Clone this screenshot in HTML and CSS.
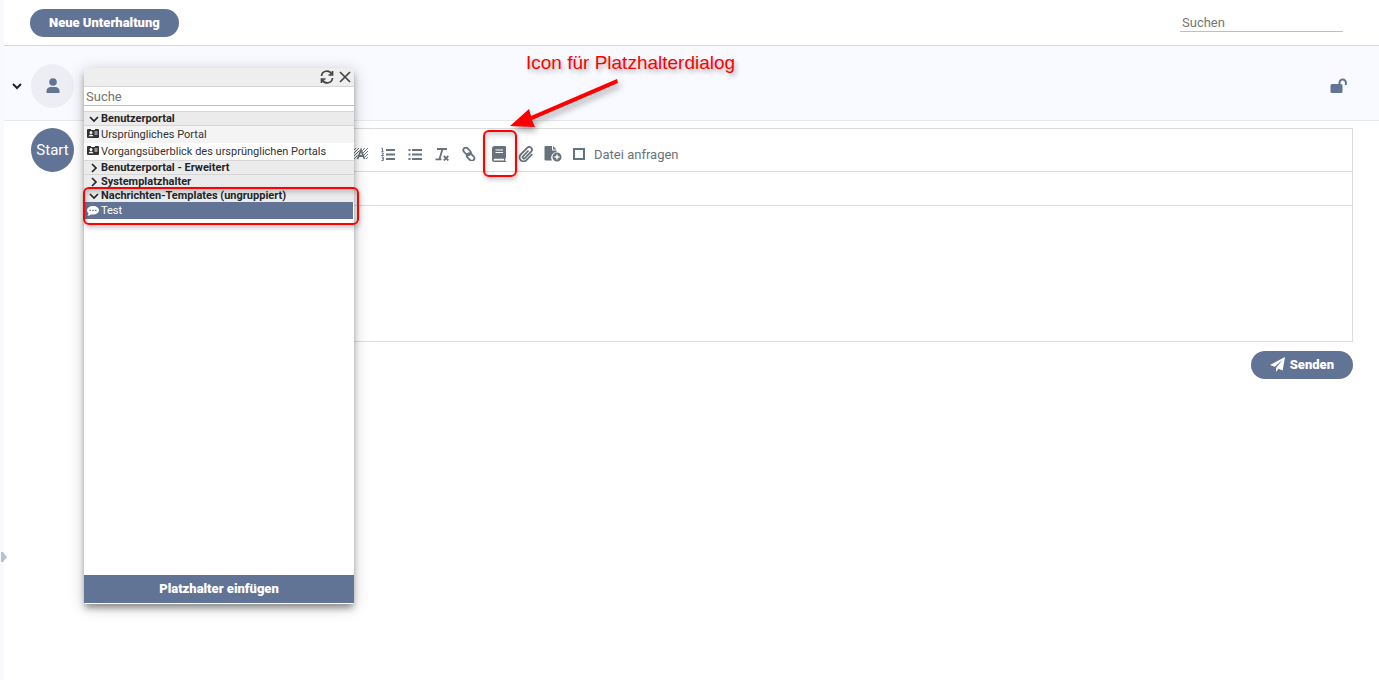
FILE: index.html
```html
<!DOCTYPE html>
<html lang="de">
<head>
    <meta charset="UTF-8">
    <meta name="viewport" content="width=device-width, initial-scale=1.0">
    <title>Unterhaltungen</title>
    <link rel="stylesheet" href="styles.css">
</head>
<body>
    <aside class="rail">
        <svg class="rail-arrow" viewBox="0 0 7 10"><path d="M1 0h2l4 5-4 5H1z"/></svg>
    </aside>
    <main class="content">
        <header class="topbar">
            <button class="pill" type="button">Neue Unterhaltung</button>
            <input class="search" type="text" placeholder="Suchen" aria-label="Suchen">
        </header>

        <section class="thread">
            <svg class="chevron" viewBox="0 0 10 10"><path d="M1 3l4 4 4-4"/></svg>
            <div class="avatar">
                <svg width="14" height="16" viewBox="0 0 14 16"><circle cx="7" cy="4" r="3.8"/><path d="M.5 15v-2C.5 10.500 2.500 9 5 9h4c2.500 0 4.500 1.500 4.500 4v2z"/></svg>
            </div>
            <svg class="lock" width="18" height="16" viewBox="0 0 18 16"><path d="M3 6h9a1.500 1.500 0 0 1 1.500 1.500v6A1.500 1.500 0 0 1 12 15H3A1.500 1.500 0 0 1 1.500 13.500v-6A1.500 1.500 0 0 1 3 6z"/><path class="shackle" d="M10.500 7V4.800a3.200 3.200 0 0 1 6.400 0V7"/></svg>
        </section>

        <section class="compose">
            <div class="avatar start">Start</div>
            <form class="compose-form">
                <div class="editor">
                    <div class="toolbar">
                        <button class="tool" type="button" aria-label="Hintergrundfarbe">
                            <svg viewBox="0 0 14 14">
                                <defs><pattern id="hatch" width="3" height="3" patternUnits="userSpaceOnUse"><path d="M2 0h1v1H2zM1 1h1v1H1zM0 2h1v1H0z"/></pattern></defs>
                                <path fill="url(#hatch)" d="M0 1h14v12H0z"/>
                                <path class="halo" d="M4 11.500L7 4l3 7.500z"/>
                                <path class="line" d="M3.500 12L7 3l3.500 9M5 9h4"/>
                            </svg>
                        </button>
                        <button class="tool" type="button" aria-label="Nummerierte Liste">
                            <svg viewBox="0 0 14 14"><path class="line" d="M5 3h9M5 7.500h9M5 12h9"/><path class="thin" d="M.5 1.500l1-.5v3.500M.5 4.500h2M.5 6h1.800v1L.5 8.500h2.300M.5 10h1.800v3.500H.5M1 11.800h1.300"/></svg>
                        </button>
                        <button class="tool" type="button" aria-label="Liste">
                            <svg viewBox="0 0 14 14"><path class="line" d="M4 3h10M4 7.500h10M4 12h10"/><path d="M.5 2h2v2h-2zM.5 6.500h2v2h-2zM.5 11h2v2h-2z"/></svg>
                        </button>
                        <button class="tool" type="button" aria-label="Formatierung entfernen">
                            <svg viewBox="0 0 14 14"><path class="line" d="M2 2h10M7.500 2L4.500 12M.5 12.300h6M8.800 9l4.500 4.500M13.300 9l-4.500 4.500"/></svg>
                        </button>
                        <button class="tool" type="button" aria-label="Link">
                            <svg viewBox="0 0 14 14"><g class="line" transform="rotate(45 7 7)"><rect x="-.5" y="4" width="8.500" height="5" rx="2.500"/><rect x="6" y="5.500" width="8.500" height="5" rx="2.500"/></g></svg>
                        </button>
                        <button class="tool gap" type="button" aria-label="Platzhalter">
                            <svg class="book" viewBox="0 0 16 16"><path fill-rule="evenodd" d="M3.500 0H14q1 0 1 1v10.500q0 .8-.7 1V15h.7v1H3.500Q1 16 1 13.500v-11Q1 0 3.500 0zM4.500 3.500v1H12v-1zM4.500 6v1H12V6zM3.700 12.800q-1 0-1 .9t1 .9H13v-1.800z"/></svg>
                        </button>
                        <button class="tool" type="button" aria-label="Datei anhängen">
                            <svg class="clip" viewBox="0 0 16 16"><path class="line" d="M10.500 4.500L5 10.300a1.300 1.300 0 0 0 1.900 1.900l6.200-6.500a2.700 2.700 0 0 0-3.900-3.900L2.700 8.500a4 4 0 0 0 5.700 5.700l5.800-6"/></svg>
                        </button>
                        <button class="tool" type="button" aria-label="Datei hinzufügen">
                            <svg class="wide" viewBox="0 0 18 16"><path d="M1.500 0H8v4.500h4.500V6A5.500 5.500 0 0 0 8 14.500H1.500Q.5 14.500.5 13.500V1q0-1 1-1zM9 0l3.500 3.500H9z"/><path fill-rule="evenodd" d="M13 6.500a4.500 4.500 0 1 1 0 9 4.500 4.500 0 0 1 0-9zM12.300 8.500v1.800h-1.800v1.400h1.800v1.800h1.400v-1.800h1.800v-1.400h-1.800V8.500z"/></svg>
                        </button>
                        <label class="request"><input type="checkbox">Datei anfragen</label>
                    </div>
                    <input class="subject" type="text" aria-label="Betreff">
                    <textarea class="message" aria-label="Nachricht"></textarea>
                </div>
                <button class="pill send" type="button">
                    <svg width="15" height="15" viewBox="0 0 16 16"><path d="M16 0L13.500 14.500 9 12.500 6.500 16V11.500L13.500 3 5 10.500 0 8.500z"/></svg>
                    Senden
                </button>
            </form>
        </section>
    </main>

    <div class="dialog" role="dialog" aria-label="Platzhalter">
        <div class="dialog-head">
            <button type="button" aria-label="Aktualisieren"><svg width="14" height="14" viewBox="0 0 14 14"><path d="M1.500 6A5.300 5.300 0 0 1 11.500 4M12.500 1v4h-4M12.500 8A5.300 5.300 0 0 1 2.500 10M1.500 13V9h4"/></svg></button>
            <button type="button" aria-label="Schließen"><svg width="14" height="14" viewBox="0 0 14 14"><path d="M2 2l10 10M12 2L2 12"/></svg></button>
        </div>
        <input class="dialog-search" type="text" placeholder="Suche" aria-label="Suche">
        <ul class="tree">
            <li class="group"><svg class="chevron" viewBox="0 0 10 10"><path d="M1 3l4 4 4-4"/></svg>Benutzerportal</li>
            <li class="item odd"><svg viewBox="0 0 12 12"><path fill-rule="evenodd" d="M1 0h3v1h4V0h3q1 0 1 1v7q0 1-1 1H1Q0 9 0 8V1q0-1 1-1zM4 2a1.500 1.500 0 1 0 0 3 1.500 1.500 0 0 0 0-3zM1.500 7.300h5Q6 5.500 4 5.500T1.500 7.300zM7.500 2.500v1h3v-1zM7.500 4.500v1h3v-1z"/></svg>Ursprüngliches Portal</li>
            <li class="item"><svg viewBox="0 0 12 12"><path fill-rule="evenodd" d="M1 0h3v1h4V0h3q1 0 1 1v7q0 1-1 1H1Q0 9 0 8V1q0-1 1-1zM4 2a1.500 1.500 0 1 0 0 3 1.500 1.500 0 0 0 0-3zM1.500 7.300h5Q6 5.500 4 5.500T1.500 7.300zM7.500 2.500v1h3v-1zM7.500 4.500v1h3v-1z"/></svg>Vorgangsüberblick des ursprünglichen Portals</li>
            <li class="group"><svg class="chevron" viewBox="0 0 10 10"><path d="M3 1l4 4-4 4"/></svg>Benutzerportal - Erweitert</li>
            <li class="group"><svg class="chevron" viewBox="0 0 10 10"><path d="M3 1l4 4-4 4"/></svg>Systemplatzhalter</li>
            <li class="group"><svg class="chevron" viewBox="0 0 10 10"><path d="M1 3l4 4 4-4"/></svg>Nachrichten-Templates (ungruppiert)</li>
            <li class="item selected"><svg viewBox="0 0 12 12"><path fill-rule="evenodd" d="M6 1c3.300 0 6 1.900 6 4.300S9.300 9.600 6 9.600q-1 0-1.900-.2Q2.500 10.700.3 10.800q.9-1 1.100-2.200Q0 7.200 0 5.300C0 2.900 2.700 1 6 1zM2.500 4.700v1.400h1.400V4.700zM5.300 4.700v1.400h1.400V4.700zM8.100 4.700v1.400h1.400V4.700z"/></svg>Test</li>
        </ul>
        <button class="insert" type="button">Platzhalter einfügen</button>
    </div>

    <!-- Hinweise -->
    <div class="mark mark-template"></div>
    <div class="mark mark-icon"></div>
    <p class="note">Icon für Platzhalterdialog</p>
    <svg class="arrow" width="112" height="52" viewBox="0 0 112 52"><path d="M109 0l1 4-86 37 3 7-25-1 19-17 2 7z"/></svg>
</body>
</html>
```
FILE: styles.css
```css
* {
    box-sizing: border-box;
}
body {
    margin: 0;
    min-height: 100vh;
    display: flex;
    position: relative;
    font-family: Roboto, "Liberation Sans", sans-serif;
    font-size: 13px;
    color: #212529;
    background: #fff;
}
button, input, textarea {
    font-family: inherit;
    font-size: inherit;
    border: 0;
    padding: 0;
    margin: 0;
    outline: 0;
    background: none;
}
svg {
    display: block;
    flex: none;
}
.rail {
    width: 4px;
    background: #f8f9fc;
}
.rail-arrow {
    position: absolute;
    left: 0;
    top: 552px;
    width: 7px;
    height: 10px;
    fill: #b4c3d2;
}
.content {
    flex: 1;
    min-width: 0;
}

/* Kopfzeile */
.topbar {
    display: flex;
    justify-content: space-between;
    align-items: center;
    height: 46px;
    padding: 0 36px 0 26px;
    border-bottom: 1px solid #d6d7da;
}
.pill {
    height: 28px;
    padding: 0 19px 1px;
    border-radius: 14px;
    background: #627496;
    color: #fff;
    font-weight: 900;
}
.search {
    width: 163px;
    height: 19px;
    padding: 0 2px;
    border-bottom: 1px solid #bfbfbf;
}
.search::placeholder, .dialog-search::placeholder {
    color: #757575;
    opacity: 1;
}

/* Unterhaltung */
.thread {
    display: flex;
    align-items: center;
    height: 75px;
    padding: 8px 32px 3px 8px;
    background: #f9faff;
    border-bottom: 1px solid #e9eaee;
}
.chevron {
    width: 10px;
    height: 10px;
    fill: none;
    stroke: #212529;
    stroke-width: 2;
}
.avatar {
    display: flex;
    justify-content: center;
    align-items: center;
    flex: none;
    width: 43px;
    height: 44px;
    border-radius: 50%;
    background: #edeef3;
    fill: #627496;
}
.thread .avatar {
    margin-left: 9px;
}
.lock {
    margin-left: auto;
    fill: #627496;
}
.shackle {
    fill: none;
    stroke: #627496;
    stroke-width: 2;
}

/* Editor */
.compose {
    display: flex;
    gap: 10px;
    padding: 7px 26px 0 27px;
}
.start {
    background: #627496;
    color: #fff;
    font-size: 15px;
}
.compose-form {
    flex: 1;
    display: flex;
    flex-direction: column;
    gap: 9px;
}
.editor {
    border: 1px solid #dcdcdc;
}
.toolbar {
    display: flex;
    align-items: center;
    height: 43px;
    padding: 8px 0 0 262px;
    border-bottom: 1px solid #dcdcdc;
}
.tool {
    width: 27px;
    height: 24px;
    display: flex;
    justify-content: center;
    align-items: center;
    fill: #68727c;
}
.tool svg {
    width: 14px;
    height: 14px;
}
.tool svg.book, .tool svg.clip {
    width: 16px;
    height: 16px;
}
.tool svg.wide {
    width: 18px;
    height: 16px;
}
.tool.gap {
    margin-left: 3px;
}
.line {
    fill: none;
    stroke: #68727c;
    stroke-width: 1.8;
}
.thin {
    fill: none;
    stroke: #68727c;
    stroke-width: 1;
}
.halo {
    fill: #fff;
    stroke: #fff;
    stroke-width: 3;
}
.request {
    display: flex;
    align-items: center;
    gap: 9px;
    margin-left: 7px;
    color: #68727c;
}
.request input {
    appearance: none;
    width: 12px;
    height: 12px;
    border: 2px solid #627486;
}
.subject {
    display: block;
    width: 100%;
    height: 34px;
    border-bottom: 1px solid #dcdcdc;
}
.message {
    display: block;
    width: 100%;
    height: 135px;
    resize: none;
}
.send {
    display: flex;
    align-items: center;
    gap: 5px;
    align-self: flex-end;
    fill: #fff;
}

/* Platzhalterdialog */
.dialog {
    position: absolute;
    left: 84px;
    top: 68px;
    width: 270px;
    height: 536px;
    display: flex;
    flex-direction: column;
    padding-bottom: 1px;
    background: #fff;
    border-radius: 2px;
    box-shadow: 0 5px 6px -1px rgba(0, 0, 0, .35), 0 3px 16px rgba(0, 0, 0, .22);
}
.dialog-head {
    display: flex;
    justify-content: flex-end;
    align-items: center;
    gap: 4px;
    height: 19px;
    padding-right: 2px;
    background: #eee;
    border-bottom: 1px solid #d6d6d6;
}
.dialog-head svg {
    fill: none;
    stroke: #444;
    stroke-width: 1.7;
}
.dialog-search {
    height: 19px;
    padding: 0 2px;
    border-bottom: 1px solid #bfbfbf;
}
.tree {
    flex: 1;
    margin: 5px 0 0;
    padding: 0;
    list-style: none;
    font-size: 11px;
}
.tree .chevron {
    stroke-width: 1.7;
}
.group, .item {
    display: flex;
    align-items: center;
    gap: 2px;
}
.group {
    height: 14px;
    padding-left: 5px;
    background: #ebebeb;
    border-top: 1px solid #d6d6d6;
    font-weight: bold;
}
.item {
    height: 17px;
    padding-left: 3px;
    color: #333;
    fill: #333;
}
.item svg {
    width: 12px;
    height: 12px;
}
.group:first-child {
    height: 15px;
    border-bottom: 1px solid #d6d6d6;
}
.odd {
    background: #f4f4f4;
}
.selected {
    margin-right: 1px;
    background: #627496;
    color: #fff;
    fill: #fff;
}
.insert {
    height: 28px;
    padding-bottom: 1px;
    background: #627496;
    color: #fff;
    font-weight: 900;
}

/* Hinweise */
.mark {
    position: absolute;
    border: 2px solid #f00;
    border-radius: 6px;
    box-shadow: 1px 3px 5px rgba(0, 0, 0, .2), inset 1px 3px 5px rgba(0, 0, 0, .2);
}
.mark-template {
    left: 83px;
    top: 187px;
    width: 276px;
    height: 38px;
}
.mark-icon {
    left: 483px;
    top: 130px;
    width: 34px;
    height: 47px;
}
.note {
    position: absolute;
    left: 526px;
    top: 51px;
    margin: 0;
    font: 19px/24px "Liberation Sans", Arial, sans-serif;
    color: #f00;
    text-shadow: 2px 3px 4px rgba(0, 0, 0, .3);
}
.arrow {
    position: absolute;
    left: 508px;
    top: 79px;
    overflow: visible;
    fill: #f00;
    filter: drop-shadow(2px 4px 3px rgba(0, 0, 0, .35));
}
```
